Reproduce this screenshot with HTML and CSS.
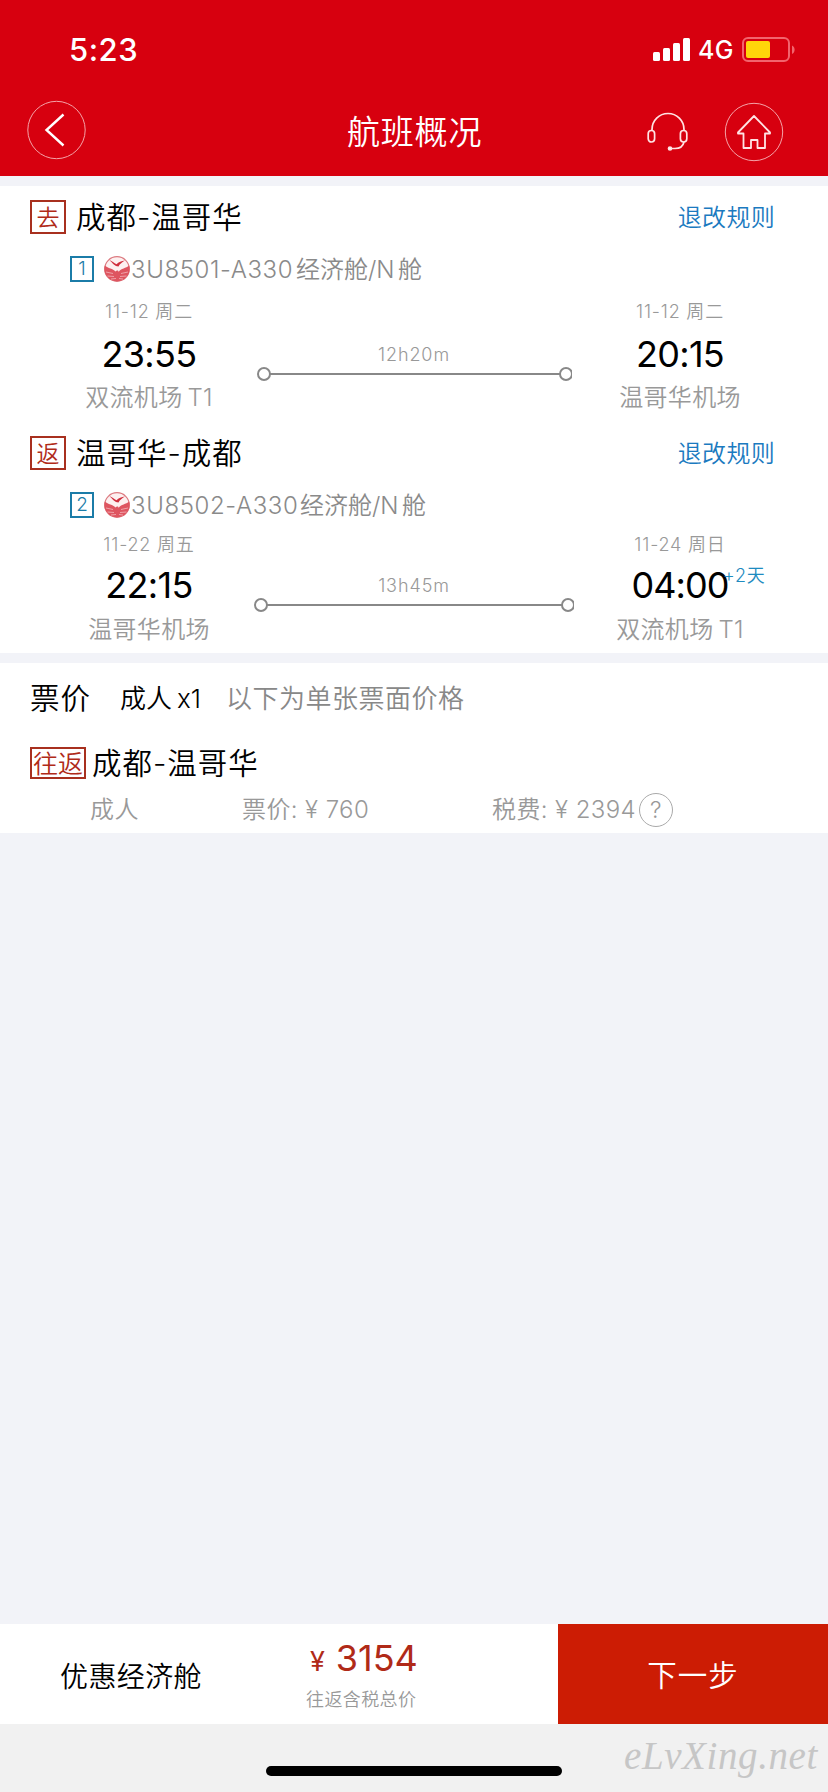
FILE: index.html
```html
<!DOCTYPE html>
<html lang="zh-CN">
<head>
<meta charset="utf-8">
<title>航班概况</title>
<link rel="stylesheet" href="styles.css">
</head>
<body>
<svg class="defs" width="0" height="0">
  <symbol id="airline" viewBox="0 0 26 26">
    <circle cx="13" cy="13" r="12.3" fill="#fdf0f0" stroke="#dc7a80" stroke-width="1.2"/>
    <path d="M.9 9.500C4 12.500 9 12.500 11.500 15.500 13 13.500 15 15 14.500 16 17 12 22 12.500 25.100 9.500A12.300 12.300 0 0 1 13 25.300 12.300 12.300 0 0 1 .9 9.500Z" fill="#de5560"/>
    <path d="M5.500 4C8 5 10 7 12.500 8.200 14.500 5.800 17.500 5 21 4.500 18 6.500 16 7.500 14.500 10.500 11 10.500 8.500 7 5.500 4Z" fill="#cf2f3d"/>
    <path d="M2 16 9 17.500M3.500 20 10 20.500M7 23 12 22.500M24 16 17 17.500M22.500 20 16 20.500M19 23 15 22.500" stroke="#f3b5ba" stroke-width=".8" fill="none"/>
  </symbol>
</svg>
<header class="header">
  <div class="status">
    <span class="clock">5:23</span>
    <svg class="signal" width="38" height="24" viewBox="0 0 38 24" fill="#fff">
      <rect x="0" y="14" width="7" height="9" rx="1.500"/><rect x="10" y="10" width="7" height="13" rx="1.500"/><rect x="20" y="5" width="7" height="18" rx="1.500"/><rect x="30" y="0" width="7" height="23" rx="1.500"/>
    </svg>
    <span class="network">4G</span>
    <svg class="battery" width="54" height="26" viewBox="0 0 54 26">
      <rect x="1" y="1" width="46" height="23" rx="5" fill="none" stroke="#f2646d" stroke-width="2"/>
      <rect x="4" y="4" width="24" height="17" rx="2" fill="#ffd60a"/>
      <path d="M50 8.500C53.500 10 53.500 15.500 50 17Z" fill="#f2646d"/>
    </svg>
  </div>
  <nav class="nav">
    <svg class="back" width="60" height="60" viewBox="0 0 60 60" fill="none" stroke="#fff">
      <circle cx="30.500" cy="30" r="28.700" stroke="#f5a3a8" stroke-width="1"/>
      <path d="M37.500 14.500 20.500 30 37.500 45.500" stroke-width="2.400"/>
    </svg>
    <h1 class="nav-title">航班概况</h1>
    <svg class="headset" width="42" height="40" viewBox="0 0 42 40" fill="none" stroke="#ffe3e4" stroke-width="1.700">
      <path d="M5 18.500V17.500A16 16 0 0 1 37 17.500V18.500M37 30C36 34.500 33 36.500 28 36.500H24"/>
      <rect x="1.200" y="18.500" width="6.400" height="11.500" rx="3.200"/><rect x="33.400" y="18.500" width="6.400" height="11.500" rx="3.200"/>
      <circle cx="23" cy="36.500" r="1.500" fill="#fff"/>
    </svg>
    <svg class="home" width="60" height="60" viewBox="0 0 60 60" fill="none" stroke="#fff">
      <circle cx="30" cy="30" r="28.700" stroke="#f5a3a8" stroke-width="1"/>
      <path d="M30 14 14 30.500V31.500H19.500V46H27V38H33.500V46H41V31.500H46V30.500Z" stroke="#ffe3e4" stroke-width="1.800" stroke-linejoin="round"/>
    </svg>
  </nav>
</header>

<main class="main">
  <section class="card trips">
    <div class="trip-head"><span class="tag">去</span><h2 class="route-name">成都-温哥华</h2><a class="rules">退改规则</a></div>
    <div class="flight"><span class="seq">1</span><svg class="logo" width="26" height="26"><use href="#airline"/></svg><span class="flight-no">3U8501-A330</span><span class="cabin">经济舱/N</span><span>舱</span></div>
    <div class="leg outbound">
      <div class="stop"><div class="date">11-12 周二</div><div class="time">23:55</div><div class="airport">双流机场<span class="terminal">T1</span></div></div>
      <div class="path"><span class="duration">12h20m</span>
        <svg width="316" height="14" viewBox="0 0 316 14" fill="#fff" stroke="#888" stroke-width="2"><path d="M14 7H304"/><circle cx="8" cy="7" r="6"/><circle cx="310" cy="7" r="6"/></svg></div>
      <div class="stop"><div class="date">11-12 周二</div><div class="time">20:15</div><div class="airport">温哥华机场</div></div>
    </div>
    <div class="trip-head"><span class="tag">返</span><h2 class="route-name">温哥华-成都</h2><a class="rules">退改规则</a></div>
    <div class="flight"><span class="seq">2</span><svg class="logo" width="26" height="26"><use href="#airline"/></svg><span class="flight-no return-no">3U8502-A330</span><span class="cabin">经济舱/N</span><span>舱</span></div>
    <div class="leg inbound">
      <div class="stop"><div class="date">11-22 周五</div><div class="time">22:15</div><div class="airport">温哥华机场</div></div>
      <div class="path"><span class="duration">13h45m</span>
        <svg width="320" height="14" viewBox="0 0 320 14" fill="#fff" stroke="#888" stroke-width="2"><path d="M13 7H308"/><circle cx="7" cy="7" r="6"/><circle cx="314" cy="7" r="6"/></svg></div>
      <div class="stop"><div class="date">11-24 周日</div><div class="time late">04:00<span class="plus">+2天</span></div><div class="airport">双流机场<span class="terminal">T1</span></div></div>
    </div>
  </section>

  <section class="card fares">
    <div class="fare-head"><h2 class="fare-title">票价</h2><span class="pax">成人<span class="count">x1</span></span><span class="note">以下为单张票面价格</span></div>
    <div class="fare-route"><span class="tag wide">往返</span><h2 class="route-name">成都-温哥华</h2></div>
    <div class="fare-row"><span class="who">成人</span><span class="price">票价: ¥ 760</span><span class="tax">税费: ¥ 2394</span><span class="help">?</span></div>
  </section>
</main>

<div class="checkout">
  <div class="product">优惠经济舱</div>
  <div class="total"><div class="amount"><span class="yen">¥</span>3154</div><div class="total-note">往返含税总价</div></div>
  <div class="next">下一步</div>
</div>
<footer class="footer"><div class="indicator"></div><div class="watermark">eLvXing.net</div></footer>
</body>
</html>
```

FILE: styles.css
```css
* { box-sizing: border-box; }
body {
  margin: 0; width: 828px; height: 1792px; overflow: hidden;
  display: flex; flex-direction: column;
  background: #f2f3f8; color: #000;
  font-family: Inter, "Noto Sans CJK SC", sans-serif;
  font-weight: 350;
}
h1, h2 { margin: 0; font-weight: inherit; }
.defs { position: absolute; }
svg { display: block; flex: none; }
span, a, h1, h2 { white-space: nowrap; }

.header { height: 176px; background: #d7000f; color: #fff; }
.status { height: 100px; display: flex; align-items: center; padding-left: 69px; }
.clock { width: 584px; padding-bottom: 1px; font-size: 31px; font-weight: 550; letter-spacing: .5px; }
.signal { margin-right: 7px; }
.network { width: 44px; font-size: 25px; font-weight: 450; letter-spacing: .3px; }
.nav { height: 60px; display: flex; align-items: center; padding-left: 26px; }
.nav-title { width: 134px; margin: 4px 166px 0 261px; font-size: 33px; line-height: 60px; letter-spacing: .8px; }
.headset { margin: 4px 35px 0 0; }
.home { margin-top: 4px; }

.main { flex: 1; display: flex; flex-direction: column; gap: 10px; padding-top: 10px; }
.card { background: #fff; }
.trips { height: 467px; }
.trip-head { height: 62px; display: flex; align-items: center; padding: 0 53px 0 30px; }
.tag {
  width: 36px; height: 34px; border: 2px solid #a8301f; color: #b02a18;
  font-size: 23px; line-height: 33px; text-align: center;
}
.route-name { margin-left: 10px; font-size: 29.500px; line-height: 63px; letter-spacing: 1px; }
.rules { margin-left: auto; color: #1b7ac0; font-size: 24px; line-height: 61px; letter-spacing: .3px; }
.flight { height: 42px; display: flex; align-items: center; padding-left: 70px; color: #8a8a8a; font-size: 24px; line-height: 42px; }
.flight-no, .flight-no ~ span { padding-top: 2px; }
.seq { width: 24px; height: 26px; border: 2px solid #1b7ca8; color: #1b7ca8; font-size: 19px; line-height: 22px; text-align: center; }
.logo { margin: 0 1px 0 10px; }
.flight-no { width: 165px; letter-spacing: .6px; }
.return-no { width: 169px; }
.cabin { width: 102px; }
.leg { display: grid; grid-template-columns: 214px 316px 216px; padding-left: 42px; text-align: center; color: #999; }
.outbound { height: 132px; }
.inbound { height: 127px; }
.date { font-size: 18px; line-height: 44px; letter-spacing: .8px; }
.time { color: #000; font-size: 36px; font-weight: 400; line-height: 41px; letter-spacing: -.7px; }
.airport { font-size: 24px; line-height: 45px; letter-spacing: .3px; }
.terminal { margin-left: 5px; }
.inbound .date { line-height: 38px; }
.inbound .time { line-height: 43px; }
.path { display: flex; flex-direction: column; align-items: center; gap: 1px; padding-top: 54px; }
.inbound .path { padding-top: 49px; }
.duration { font-size: 18px; line-height: 22px; letter-spacing: .9px; }
.inbound .late { position: relative; letter-spacing: -1px; }
.plus { position: absolute; left: 151px; top: -10px; color: #1e8bc0; font-size: 18px; font-weight: 350; letter-spacing: .8px; }

.fares { height: 170px; }
.fare-head { height: 70px; display: flex; align-items: center; padding-left: 30px; line-height: 71px; }
.fare-title { width: 90px; font-size: 29.500px; letter-spacing: 1px; }
.pax { width: 106px; font-size: 26px; }
.count { margin-left: 5px; }
.note { color: #888; font-size: 26px; letter-spacing: .5px; }
.fare-route { height: 60px; display: flex; align-items: center; padding-left: 30px; }
.wide { width: 56px; height: 32px; font-size: 25px; line-height: 30px; }
.fare-route .route-name { margin-left: 6px; }
.fare-row { height: 34px; display: flex; align-items: center; padding-left: 90px; color: #999; font-size: 24px; line-height: 30px; letter-spacing: .4px; }
.who { width: 152px; }
.price { width: 250px; }
.tax { width: 147px; }
.help { width: 34px; height: 34px; border: 1px solid #aaa; border-radius: 50%; font-size: 23px; line-height: 33px; text-align: center; }

.checkout { height: 100px; display: flex; background: #fff; }
.product { width: 306px; padding-left: 60px; font-size: 28px; line-height: 107px; letter-spacing: .4px; }
.total { width: 252px; padding-top: 13px; }
.amount { color: #b02a18; font-size: 36px; font-weight: 400; line-height: 42px; padding-left: 4px; }
.yen { font-size: 27px; margin-right: 11px; }
.total-note { color: #999; font-size: 18px; line-height: 34px; letter-spacing: .4px; }
.next { flex: 1; background: #cc1c04; color: #fff; text-align: center; font-size: 29.500px; line-height: 102px; letter-spacing: 1px; }
.footer { height: 68px; display: flex; align-items: flex-start; background: #f1f1f1; }
.indicator { width: 296px; height: 10px; margin: 42px 62px 0 266px; border-radius: 5px; background: #000; }
.watermark { margin-top: 9px; color: #c6c6c6; font: italic 39px/46px "Liberation Serif", serif; letter-spacing: .6px; }
```
